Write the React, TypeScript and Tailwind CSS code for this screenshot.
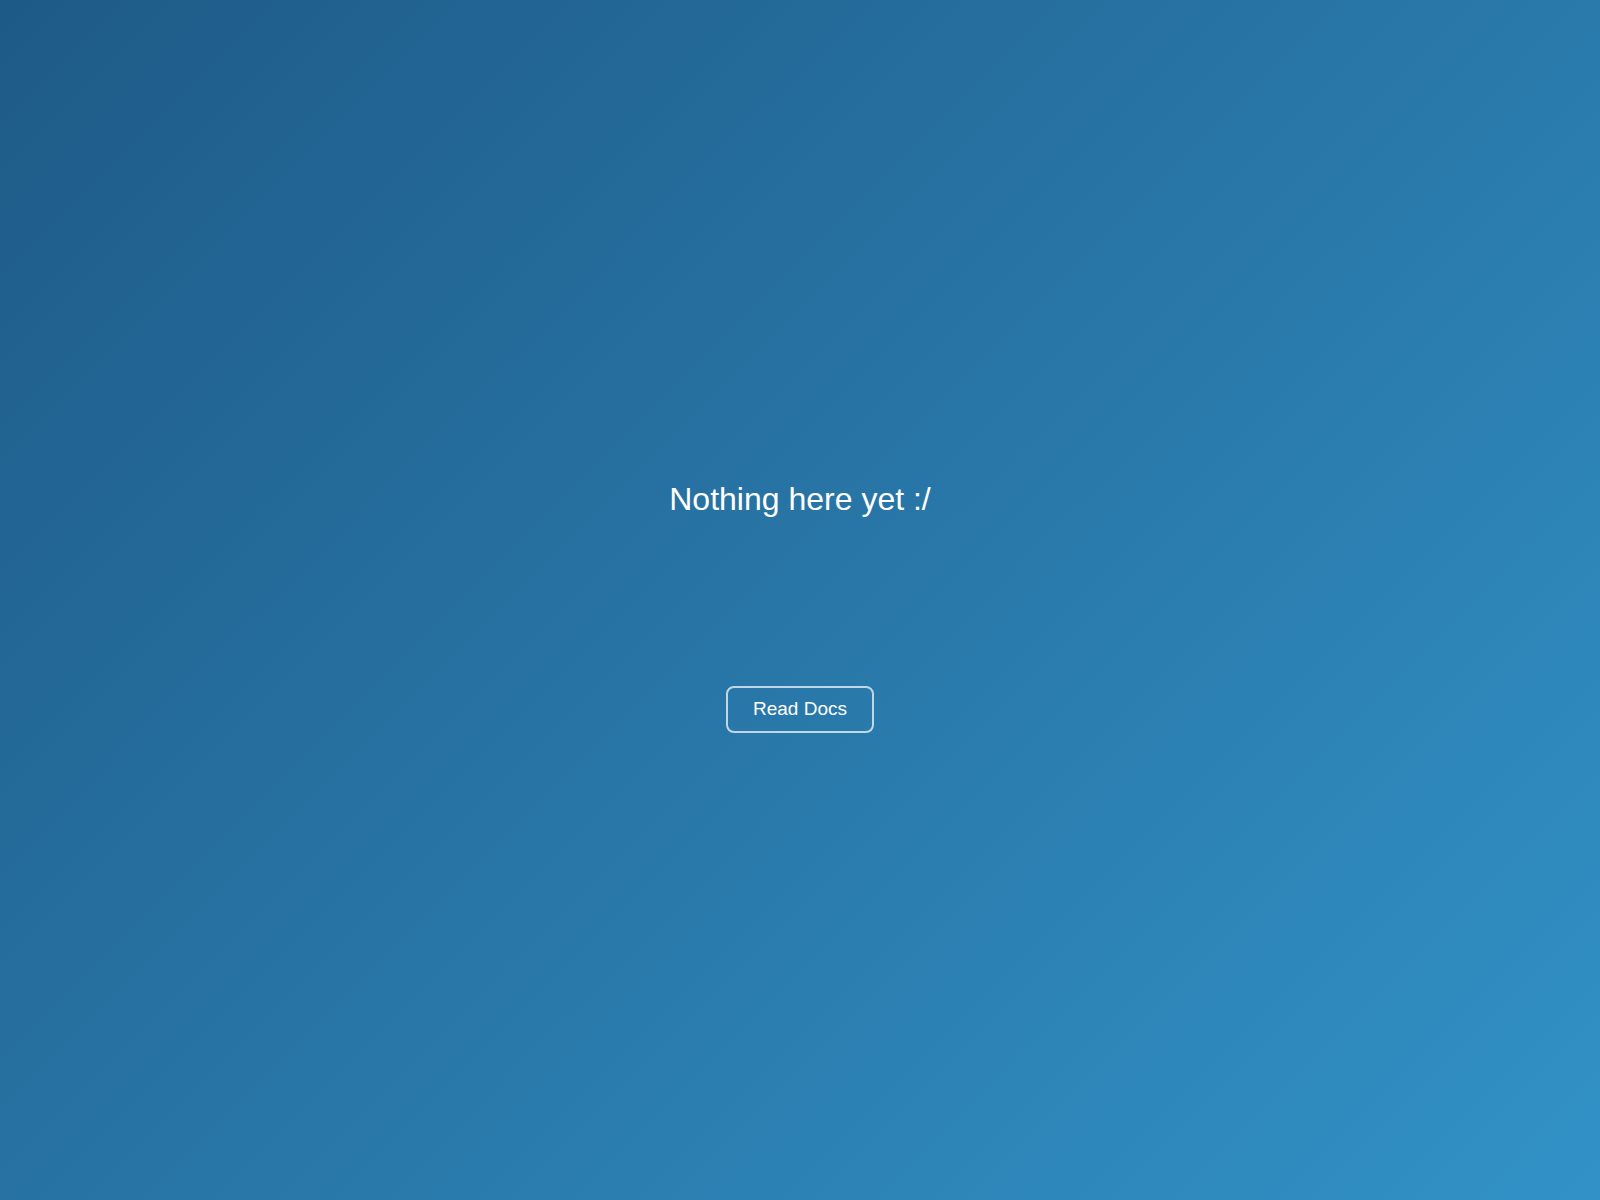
import React from "react";

const App = () => {
  return (
    <div className="h-screen w-full bg-[linear-gradient(135deg,#1e5a87,#3292c7)] font-['Liberation_Sans',Arial,sans-serif] text-white">
      <div className="flex flex-col items-center pt-[479px]">
        <h1 className="text-[32px] leading-[40px] font-normal">Nothing here yet :/</h1>
        <button className="mt-[167px] h-[47px] w-[148px] rounded-lg border-2 border-white/70 text-[19px] text-white">
          Read Docs
        </button>
      </div>
    </div>
  );
};

export default App;
